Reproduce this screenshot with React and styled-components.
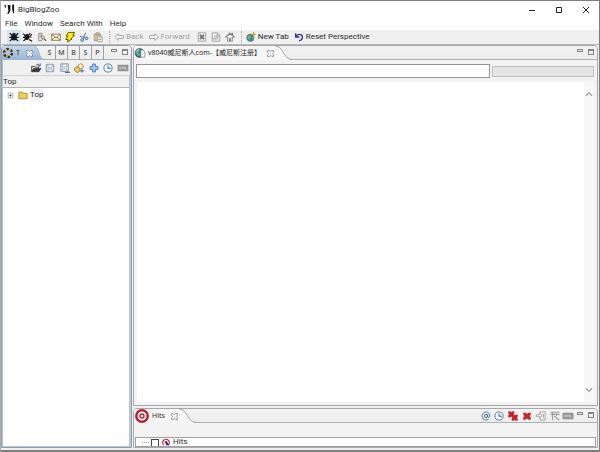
import React from "react";
import styled, { createGlobalStyle } from "styled-components";

const GlobalStyle = createGlobalStyle`
  * { box-sizing: border-box; }
  body { margin: 0; background: #f0f0f0; }
  button, input { font: inherit; color: inherit; margin: 0; padding: 0; border: 0; background: none; }
  svg { display: block; flex: none; overflow: visible; }
`;

const Window = styled.div`
  display: flex;
  flex-direction: column;
  height: 100vh;
  border: 1px solid #7d7d7d;
  border-bottom-width: 2px;
  border-left-color: #a9b0b8;
  background: #f0f0f0;
  color: #2a2a2a;
  font: 8px/12px Roboto, "Noto Sans CJK SC", sans-serif;
  overflow: hidden;
`;

const TitleBar = styled.header`
  display: flex;
  align-items: center;
  height: 17px;
  padding-left: 3px;
  background: #fff;
`;

const Title = styled.h1`
  flex: 1;
  margin: 0 0 0 3px;
  font: inherit;
`;

const WindowButton = styled.button`
  display: grid;
  place-items: center;
  width: 27px;
  height: 17px;
`;

const MenuBar = styled.nav`
  display: flex;
  align-items: center;
  gap: 7px;
  height: 12px;
  padding-left: 4px;
  background: #fff;
`;

const MenuItem = styled.button`
  white-space: nowrap;
`;

const ToolBar = styled.div`
  display: flex;
  align-items: center;
  height: 15px;
  padding-left: 6px;
  border-bottom: 1px solid #b8b8b8;
`;

const ToolButton = styled.button`
  display: grid;
  place-items: center;
  width: 14px;
  height: 14px;
  background: ${(p) => (p.$active ? "#d5e4f1" : "none")};
`;

const LabelButton = styled.button`
  display: flex;
  align-items: center;
  gap: 2px;
  height: 14px;
  margin-right: 5px;
  white-space: nowrap;
  color: ${(p) => (p.$muted ? "#a0a0a0" : "#2a2a2a")};
`;

const Grip = styled.span`
  height: 12px;
  margin: 0 4px;
  border-left: 1px dotted #aaa;
`;

const Workspace = styled.main`
  flex: 1;
  min-height: 0;
  display: grid;
  grid-template-columns: 131px minmax(0, 1fr);
  gap: 1px;
  padding: 0 1px 2px 0;
`;

const SidePanel = styled.section`
  display: flex;
  flex-direction: column;
  border: 1px solid #929eac;
  border-radius: 4px 4px 0 0;
  overflow: hidden;
`;

const EditorColumn = styled.div`
  display: grid;
  grid-template-rows: minmax(0, 1fr) 40px;
  gap: 2px;
  min-height: 0;
`;

const Panel = styled.section`
  display: flex;
  flex-direction: column;
  min-height: 0;
  border: 1px solid #a8a8a8;
  border-radius: 4px 4px 0 0;
  overflow: hidden;
  background: #f3f3f3;
`;

const TabStrip = styled.div`
  display: flex;
  height: 14px;
  font-family: "Noto Sans", "Noto Sans CJK SC", sans-serif;
  font-size: 7px;
  background: linear-gradient(#f3f3f3, #ececec);
  box-shadow: inset 0 -1px #b0b0b0;
`;

const Tab = styled.div`
  display: flex;
  align-items: center;
  height: 14px;
  padding-left: 1px;
  white-space: nowrap;
  background: ${(p) => (p.$blue ? "linear-gradient(#c3d7ee, #99b4d6)" : "#f6f6f6")};
`;

const TabButton = styled.button`
  display: flex;
  align-items: center;
  gap: 3px;
`;

const CloseButton = styled.button`
  display: grid;
  place-items: center;
  width: 8px;
  height: 10px;
  margin-left: 6px;
`;

const SmallTab = styled.button`
  width: 12px;
  height: 14px;
  border-right: 1px solid #a0a0a0;
`;

const PaneControls = styled.div`
  display: flex;
  align-items: center;
  gap: 5px;
  margin-left: auto;
  padding: 0 3px 3px 0;
`;

const PaneButton = styled.button`
  width: 6px;
  height: ${(p) => (p.$min ? "3px" : "6px")};
  margin-bottom: ${(p) => (p.$min ? "3px" : "0")};
  border: 1px solid #858585;
  border-top-width: ${(p) => (p.$min ? "1px" : "2px")};
`;

const LocalTools = styled.div`
  display: flex;
  justify-content: space-between;
  align-items: center;
  height: 15px;
  padding: 0 2px 0 27px;
  border: solid #aebed1;
  border-width: 0 1px;
`;

const IconButton = styled.button`
  display: grid;
  place-items: center;
  width: 11px;
  height: 12px;
`;

const TreeFrame = styled.div`
  flex: 1;
  display: flex;
  flex-direction: column;
  border: 2px solid #b7c6d8;
  border-width: 0 2px 1px 1px;
`;

const TreeHeader = styled.h2`
  height: 13px;
  margin: 0;
  font: inherit;
  line-height: 12px;
  background: #f0f0f0;
  border-top: 1px solid #d2d2d2;
  border-bottom: 1px solid #b6b6b6;
`;

const Tree = styled.ul`
  flex: 1;
  margin: 0;
  padding: 1px 0 0 2px;
  list-style: none;
  background: #fff;
`;

const TreeItem = styled.li`
  display: flex;
  align-items: center;
  height: 12px;
  gap: 2px;
`;

const TreeLabel = styled.span`
  background: #f2f2f2;
`;

const AddressRow = styled.div`
  display: grid;
  grid-template-columns: minmax(0, 1fr) 102px;
  align-items: center;
  gap: 2px;
  padding: 4px 3px 4px 2px;
`;

const Address = styled.input`
  width: 100%;
  height: 14px;
  padding: 0 2px;
  border: 1px solid #949494;
  background: #fff;
`;

const Progress = styled.div`
  height: 11px;
  border: 1px solid #bfbfbf;
  background: #e5e5e5;
`;

const Page = styled.div`
  flex: 1;
  display: flex;
  justify-content: flex-end;
  margin: 0 3px 3px;
  background: #fff;
`;

const ScrollBar = styled.div`
  display: flex;
  flex-direction: column;
  justify-content: space-between;
  width: 10px;
  padding: 8px 1px;
  background: #f7f7f7;
`;

const HitTools = styled.div`
  display: flex;
  justify-content: space-between;
  align-items: center;
  width: 94px;
  height: 13px;
  margin-left: auto;
  margin-right: 3px;
`;

const HitControls = styled(PaneControls)`
  margin-left: 0;
`;

const HitList = styled.ul`
  height: 10px;
  margin: 14px 1px 0;
  padding: 0 0 0 6px;
  list-style: none;
  border: 1px solid #a0a0a0;
  background: #fff;
`;

const HitRow = styled.li`
  display: flex;
  align-items: center;
  height: 8px;
  line-height: 8px;
`;

const HitLabel = styled.label`
  display: flex;
  align-items: center;
  gap: 3px;
`;

const Branch = styled.span`
  width: 7px;
  margin-right: 2px;
  border-top: 1px dotted #999;
`;

const Check = styled.input`
  appearance: none;
  width: 8px;
  height: 7px;
  border: 1px solid #444;
  border-bottom: 0;
`;

const art = {
  bug: (
    <g stroke="#151515" strokeWidth="1.5" fill="none">
      <ellipse cx="6" cy="6.3" rx="2.6" ry="3.1" fill="#151515" />
      <path d="M1 1.5 4 4.5M11 1.5 8 4.5M.5 6.5h11M1 11l3-3M11 11 8 8M4.5 1.5 6 3l1.5-1.5" />
    </g>
  ),
  bugEdit: (
    <g stroke="#151515" strokeWidth="1.4" fill="none">
      <ellipse cx="4.5" cy="6" rx="2.2" ry="2.8" fill="#151515" />
      <path d="M0 2l3 2.5M9 1.5 6 4M0 6.5h8M.5 11 3 8.5M10.5 3 7 6.5M7 9l4 2" />
      <path d="M8 7l2.5-1" stroke="#a58b4b" />
    </g>
  ),
  find: (
    <g fill="none" stroke="#888">
      <path d="M2 1.5h4v9H2zM3 3.5h3M3 5.5h3" fill="#e7e7e7" />
      <path d="M7.5 7l3.5 3.5" stroke="#555" strokeWidth="1.5" />
      <circle cx="7" cy="6.5" r="1.8" fill="#f1caaa" stroke="#a87959" />
    </g>
  ),
  mail: <path d="M.8 2.5h10.4v7.5H.8zM.8 2.5 6 7l5.2-4.5M.8 10 5 6M11.2 10 7 6" fill="#fff3b5" stroke="#777157" />,
  bolt: <path d="M4 .5h7.5L9.5 4h1.7L7 8.5h1.3L3 12l.7-3H.8L3.5 5H1.5z" fill="#ffed00" stroke="#464000" />,
  cut: (
    <g fill="none" stroke="#5b80a8" strokeWidth="1.3">
      <path d="M8 1 5 8M1 5l7 2" />
      <circle cx="3.8" cy="9.5" r="1.6" /><circle cx="9.3" cy="7.5" r="1.5" />
    </g>
  ),
  paste: (
    <g stroke="#9b927f" strokeWidth=".9">
      <path d="M1.5 2.5h7.5v8H1.5z" fill="#d9bf91" /><path d="M3.5 1h4v2.5h-4z" fill="#bbb" />
      <path d="M5.5 5H11v6.5H5.5z" fill="#f8f8f8" /><path d="M6.5 7H10M6.5 9H10" />
    </g>
  ),
  back: <path d="M.8 6 5 2v2.2h6.2v3.6H5V10z" fill="#f6f6f6" stroke="#999" />,
  forward: <path d="M11.2 6 7 2v2.2H.8v3.6H7V10z" fill="#f6f6f6" stroke="#999" />,
  stop: <><path d="M1.5 1h9v10h-9z" fill="#eee" stroke="#999" /><path d="M3.5 3.5l5 5M8.5 3.5l-5 5" stroke="#6c6c6c" strokeWidth="2" /></>,
  refresh: <path d="M1.5 1H7.5l3 3v7h-9zM7.5 1v3h3M4 6.5c0-2 3.5-2 3.5-.5M8 7c0 2-3.5 2-3.5.5M7 4.5v2h2M3.5 9.5v-2h2" fill="none" stroke="#999" />,
  home: <><path d="M3 6v5h6V6" fill="#ddd" stroke="#8d8d8d" /><path d="M.5 6.5 6 1.5l5.5 5M9 1v3" fill="none" stroke="#858585" strokeWidth="1.6" /><path d="M5 7.5h2V11H5z" fill="#777" /></>,
  globe: (
    <>
      <circle cx="5.5" cy="6" r="5.5" fill="#2f6791" stroke="#47576a" strokeWidth=".7" />
      <path d="M1 4c2-3 5-3 5-1.5L4 5l2.5 2-2 3.5L2.5 8 .5 6z" fill="#64b06c" />
      <path d="M2 3.5 4.500 1.800" stroke="#d7eff4" strokeWidth="1.2" />
      <path d="M7 2.500h3l1.800 2V11H7z" fill="#f7f9fa" stroke="#6e8490" strokeWidth=".8" />
    </>
  ),
  newTab: <><circle cx="5.3" cy="7" r="4.5" fill="#3a80a3" stroke="#55717b" strokeWidth=".5" /><path d="M1.5 6l3-2.5 1.5 3-2 3.5zM7 5l2.5 2L8 10z" fill="#74bb70" /><path d="M9 0v5.5M6.2 2.7h5.6" stroke="#d0a52c" strokeWidth="1.5" /></>,
  undo: <path d="M2 1.5V6h4.5M2.5 5.5C4 2 9.5 2 10 5.5c.4 2.6-1.5 4.5-4 5" fill="none" stroke="#303c91" strokeWidth="1.7" />,
  zoo: <><circle cx="6" cy="6" r="4.8" fill="none" stroke="#30281b" strokeWidth="2.8" strokeDasharray="3 2" /><circle cx="6" cy="6" r="4.5" fill="none" stroke="#d4a33d" strokeWidth="1.6" strokeDasharray="2 3" strokeDashoffset="2.5" /></>,
  open: <><path d="M.8 10.500V4H4l1 1h4v2" fill="#f5e4a4" stroke="#333" /><path d="M.8 10.500 3 6.500h9L9.500 10.500z" fill="#303b49" stroke="#222" strokeWidth=".7" /><path d="M6 3c1-2 3-2 4 0M11 .5v3H8" fill="none" stroke="#315d86" strokeWidth="1.2" /></>,
  save: <><path d="M1.5 1.5h9v9h-9z" fill="#dce9ee" stroke="#7890a2" /><path d="M3.5 2h5v3h-5zM3.5 7.5h5v2.5h-5z" fill="#fff" stroke="#8fa4b2" strokeWidth=".8" /></>,
  saveAs: <><path d="M1 1h9v9H1z" fill="#dce9ee" stroke="#7890a2" /><path d="M3 1.5h5v3H3zM3 7h5v2.5H3z" fill="#fff" stroke="#8fa4b2" strokeWidth=".8" /><path d="M6 11.3h6" stroke="#536c80" strokeWidth="1.5" /></>,
  blocks: <g stroke="#947a2d" strokeWidth=".9"><path d="M.8 6l3.2-2L7 6v4l-3 1.5-3.2-2z" fill="#e9cc65" /><path d="M5 2.5 8 .8l3 1.7V5.5L8 7 5 5.5z" fill="#fff0a0" /><path d="M9.5 7v4.5M7.3 9.300h4.500" stroke="#537eb8" strokeWidth="1.5" /></g>,
  plus: <path d="M4.3 1.3h3.4v3h3v3.4h-3v3H4.3v-3h-3V4.3h3z" fill="#a3c8f3" stroke="#4d80c2" strokeWidth="1.2" />,
  clock: <><circle cx="6" cy="6" r="4.9" fill="#f8fbfd" stroke="#5d88a5" strokeWidth="1.2" /><path d="M6 3v3.3h3.3" fill="none" stroke="#30647f" strokeWidth="1.2" /></>,
  xml: <><path d="M-.5 2h13v8h-13z" fill="#919191" /><path d="M1.5 4.5l2 3M3.5 4.5l-2 3M5 7.5v-3l1.2 2 1.3-2v3M9 4.5v3h1.500" fill="none" stroke="#dedede" strokeWidth=".8" /></>,
  folder: <path d="M1 10.5V2.5h4l1 1.5h5v6.5z" fill="#ead15b" stroke="#9d873c" />,
  cross: <path d="M2 2.5h2l2 1.500 2-1.500h2v2L8.800 6 10 8v2H8L6 8.500 4 10H2V8l1.200-2L2 4.500z" fill="#d0252a" stroke="#a71920" strokeWidth=".8" />,
  crosses: <g fill="#d42027" stroke="#a71920" strokeWidth=".8"><path d="M.8.8h2l1.2 1 1.2-1h2v2L6.2 4l1 1.2v2h-2L4 6.2l-1.2 1h-2v-2l1-1.2-1-1.2z" /><path d="M4.8 4.8h2L8 5.800l1.200-1h2v2L10.200 8l1 1.200v2h-2L8 10.200l-1.200 1h-2v-2l1-1.200-1-1.200z" /></g>,
  import: <path d="M5 3V1h6v10H5V8M.5 4.5H4V2.5l3.5 3L4 8.5V6.5H.5zM9 3.5v5" fill="none" stroke="#a0a0a0" />,
  filter: <path d="M.5 1.5h11M.5 4h11M3 1.5V11M5 6l6 5M8 4v2" fill="none" stroke="#999" strokeWidth="1.3" />,
  at: <><circle cx="6" cy="6" r="1.9" fill="none" stroke="#3a7195" strokeWidth="1.2" /><path d="M8 3.8v3.5c1.8 1 2.9-.5 2.5-2.5C10 1.8 6.5.3 3.8 1.8 1 3.2.5 7 2.5 9.3c1.7 1.8 4.5 1.9 6.5.7" fill="none" stroke="#3a7195" strokeWidth="1.1" /></>,
  target: <><circle cx="6" cy="6" r="4.9" fill="#fff" stroke="#b52131" strokeWidth="2.1" /><circle cx="6" cy="6" r="1.7" fill="#fff" stroke="#b52131" strokeWidth="1.2" /></>,
  targetCursor: <><path d="M2.5 10.5A5 5 0 1 1 9.5 10.5" fill="#fff" stroke="#c82a35" strokeWidth="1.7" /><circle cx="6" cy="6.5" r="2" fill="#c82a35" /><path d="M6 5v6h4V9z" fill="#23298c" /></>,
  tabClose: <path d="M1 1h3l2 2 2-2h3v3L9 6l2 2v3H8L6 9l-2 2H1V8l2-2-2-2z" fill="#fafafa" stroke="#777" strokeWidth="1.3" />,
  expander: <><path d="M2 2h8v8H2z" fill="#fff" stroke="#999" strokeWidth="1.3" /><path d="M4 6h4M6 4v4" stroke="#335" strokeWidth="1.3" /></>,
  up: <path d="M1.5 8.5 6 4l4.5 4.5" fill="none" stroke="#a6a6a6" strokeWidth="2.2" />,
  down: <path d="M1.5 3.5 6 8l4.5-4.5" fill="none" stroke="#a6a6a6" strokeWidth="2.2" />,
  minimize: <path d="M3 6.5h6" stroke="#222" />,
  maximize: <path d="M3.5 3.5h5v5h-5z" fill="none" stroke="#222" />,
  close: <path d="M3 3l6 6M9 3 3 9" stroke="#222" />,
  logo: <path d="M.5 1H2v3H1M4 1h3v6l-2 4H3.500L5 7 4.500 6zM9 .5h2V10h-1L9 6z" fill="#111" />,
};

const Icon = ({ name, size = 10 }) => (
  <svg width={size} height={size} viewBox="0 0 12 12" aria-hidden="true">{art[name]}</svg>
);

const TabEdge = ({ blue, width = 17 }) => (
  <svg width={width} height="14" viewBox="0 0 17 14" preserveAspectRatio="none" aria-hidden="true">
    <defs>
      <linearGradient id="edge-blue" x1="0" y1="0" x2="0" y2="1">
        <stop offset="0" stopColor="#c3d7ee" />
        <stop offset="1" stopColor="#99b4d6" />
      </linearGradient>
    </defs>
    <path d="M0 0C9 0 8 13.5 17 13.5V14H0z" fill={blue ? "url(#edge-blue)" : "#f6f6f6"} />
    <path d="M0 0C9 0 8 13.5 17 13.5" fill="none" stroke={blue ? "#8fa8c6" : "#a5a5a5"} />
  </svg>
);

const Close = ({ label }) => (
  <CloseButton aria-label={label}><Icon name="tabClose" size={7} /></CloseButton>
);

const MinMax = ({ box: Box = PaneControls }) => (
  <Box>
    <PaneButton $min aria-label="Minimize view" />
    <PaneButton aria-label="Maximize view" />
  </Box>
);

const mainTools = [["bug", "Feeds"], ["bugEdit", "Edit feeds"], ["find", "Find"], ["mail", "Mail"], ["bolt", "Run"], ["cut", "Cut"], ["paste", "Paste"]];
const sideTools = [["open", "Open"], ["save", "Save"], ["saveAs", "Save as"], ["blocks", "Add category"], ["plus", "Add"], ["clock", "Schedule"], ["xml", "XML"]];
const hitTools = [["at", "Address"], ["clock", "Schedule"], ["crosses", "Remove all"], ["cross", "Remove"], ["import", "Import"], ["filter", "Filter"], ["xml", "XML"]];

export default function App() {
  return (
    <>
      <GlobalStyle />
      <Window>
        <TitleBar>
          <Icon name="logo" size={11} />
          <Title>BigBlogZoo</Title>
          <WindowButton aria-label="Minimize"><Icon name="minimize" size={12} /></WindowButton>
          <WindowButton aria-label="Maximize"><Icon name="maximize" size={12} /></WindowButton>
          <WindowButton aria-label="Close"><Icon name="close" size={12} /></WindowButton>
        </TitleBar>
        <MenuBar>
          {["File", "Window", "Search With", "Help"].map((m) => <MenuItem key={m}>{m}</MenuItem>)}
        </MenuBar>
        <ToolBar>
          {mainTools.map(([name, label], i) => (
            <ToolButton key={name} $active={i === 0} aria-label={label}><Icon name={name} /></ToolButton>
          ))}
          <Grip />
          <LabelButton $muted><Icon name="back" />Back</LabelButton>
          <LabelButton $muted><Icon name="forward" />Forward</LabelButton>
          <ToolButton aria-label="Stop"><Icon name="stop" /></ToolButton>
          <ToolButton aria-label="Refresh"><Icon name="refresh" /></ToolButton>
          <ToolButton aria-label="Home"><Icon name="home" /></ToolButton>
          <Grip />
          <LabelButton><Icon name="newTab" />New Tab</LabelButton>
          <LabelButton><Icon name="undo" />Reset Perspective</LabelButton>
        </ToolBar>
        <Workspace>
          <SidePanel>
            <TabStrip>
              <Tab $blue>
                <TabButton><Icon name="zoo" />T</TabButton>
                <Close label="Close T" />
              </Tab>
              <TabEdge blue width={10} />
              {["S", "M", "B", "S", "P"].map((t, i) => <SmallTab key={i}>{t}</SmallTab>)}
              <MinMax />
            </TabStrip>
            <LocalTools>
              {sideTools.map(([name, label]) => <IconButton key={name} aria-label={label}><Icon name={name} /></IconButton>)}
            </LocalTools>
            <TreeFrame>
              <TreeHeader>Top</TreeHeader>
              <Tree>
                <TreeItem>
                  <IconButton aria-label="Expand Top"><Icon name="expander" size={7} /></IconButton>
                  <Icon name="folder" />
                  <TreeLabel>Top</TreeLabel>
                </TreeItem>
              </Tree>
            </TreeFrame>
          </SidePanel>
          <EditorColumn>
            <Panel>
              <TabStrip>
                <Tab>
                  <TabButton><Icon name="globe" />v8040威尼斯人com-【威尼斯注册】</TabButton>
                  <Close label="Close page" />
                </Tab>
                <TabEdge />
                <MinMax />
              </TabStrip>
              <AddressRow>
                <Address aria-label="Address" />
                <Progress role="progressbar" aria-label="Loading" />
              </AddressRow>
              <Page>
                <ScrollBar>
                  <Icon name="up" size={8} />
                  <Icon name="down" size={8} />
                </ScrollBar>
              </Page>
            </Panel>
            <Panel>
              <TabStrip>
                <Tab>
                  <TabButton><Icon name="target" size={14} />Hits</TabButton>
                  <Close label="Close Hits" />
                </Tab>
                <TabEdge />
                <HitTools>
                  {hitTools.map(([name, label]) => <IconButton key={name} aria-label={label}><Icon name={name} /></IconButton>)}
                </HitTools>
                <MinMax box={HitControls} />
              </TabStrip>
              <HitList>
                <HitRow>
                  <Branch />
                  <HitLabel>
                    <Check type="checkbox" />
                    <Icon name="targetCursor" size={8} />
                    Hits
                  </HitLabel>
                </HitRow>
              </HitList>
            </Panel>
          </EditorColumn>
        </Workspace>
      </Window>
    </>
  );
}
